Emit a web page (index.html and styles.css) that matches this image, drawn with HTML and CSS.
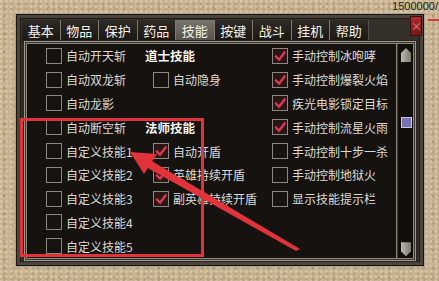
FILE: index.html
```html
<!DOCTYPE html>
<html lang="zh">
<head>
<meta charset="utf-8">
<link rel="stylesheet" href="styles.css">
</head>
<body>
<div class="hud">1500000/</div>
<div class="hud-line"></div>
<div class="panel">
  <div class="topbar">
    <div class="tabs">
      <div class="tab">基本</div>
      <div class="tab">物品</div>
      <div class="tab">保护</div>
      <div class="tab">药品</div>
      <div class="tab active">技能</div>
      <div class="tab">按键</div>
      <div class="tab">战斗</div>
      <div class="tab">挂机</div>
      <div class="tab">帮助</div>
    </div>
    <div class="close"><span>×</span></div>
  </div>
  <div class="body">
    <div class="list">
      <div class="item"><span class="box"></span>自动开天斩</div>
      <div class="head">道士技能</div>
      <div class="item"><span class="box on"><svg viewBox="0 0 15 15"><path d="M3 8 L6.5 11.5 L12.5 3.5"/></svg></span>手动控制冰咆哮</div>

      <div class="item"><span class="box"></span>自动双龙斩</div>
      <div class="item c2"><span class="box"></span>自动隐身</div>
      <div class="item"><span class="box on"><svg viewBox="0 0 15 15"><path d="M3 8 L6.5 11.5 L12.5 3.5"/></svg></span>手动控制爆裂火焰</div>

      <div class="item"><span class="box"></span>自动龙影</div>
      <div class="empty"></div>
      <div class="item"><span class="box on"><svg viewBox="0 0 15 15"><path d="M3 8 L6.5 11.5 L12.5 3.5"/></svg></span>疾光电影锁定目标</div>

      <div class="item"><span class="box"></span>自动断空斩</div>
      <div class="head">法师技能</div>
      <div class="item"><span class="box on"><svg viewBox="0 0 15 15"><path d="M3 8 L6.5 11.5 L12.5 3.5"/></svg></span>手动控制流星火雨</div>

      <div class="item"><span class="box"></span>自定义技能1</div>
      <div class="item c2"><span class="box on"><svg viewBox="0 0 15 15"><path d="M3 8 L6.5 11.5 L12.5 3.5"/></svg></span>自动开盾</div>
      <div class="item"><span class="box"></span>手动控制十步一杀</div>

      <div class="item"><span class="box"></span>自定义技能2</div>
      <div class="item c2"><span class="box on"><svg viewBox="0 0 15 15"><path d="M3 8 L6.5 11.5 L12.5 3.5"/></svg></span>英雄持续开盾</div>
      <div class="item"><span class="box"></span>手动控制地狱火</div>

      <div class="item"><span class="box"></span>自定义技能3</div>
      <div class="item c2"><span class="box on"><svg viewBox="0 0 15 15"><path d="M3 8 L6.5 11.5 L12.5 3.5"/></svg></span>副英雄持续开盾</div>
      <div class="item"><span class="box"></span>显示技能提示栏</div>

      <div class="item"><span class="box"></span>自定义技能4</div>
      <div class="empty"></div>
      <div class="empty"></div>

      <div class="item"><span class="box"></span>自定义技能5</div>
      <div class="empty"></div>
      <div class="empty"></div>
    </div>
    <div class="scroll">
      <div class="arrow up"></div>
      <div class="thumb"></div>
      <div class="arrow down"></div>
    </div>
  </div>
</div>
<div class="mark"></div>
<svg class="pointer" width="439" height="281" viewBox="0 0 439 281">
  <polygon points="300,249 296,251 146,167 150,160" fill="#e2333b"/>
  <polygon points="130,152 157,154 144,174" fill="#e2333b"/>
</svg>
</body>
</html>
```
FILE: styles.css
```css
* { box-sizing: border-box; }
html, body { margin: 0; padding: 0; }
body {
  width: 439px;
  height: 281px;
  overflow: hidden;
  position: relative;
  font-family: "Noto Sans CJK SC", "Noto Sans", sans-serif;
  background-color: #c7b391;
  background-image:
    radial-gradient(circle at 20% 30%, rgba(255,245,220,0.3) 0 1px, transparent 2px),
    radial-gradient(circle at 70% 60%, rgba(120,95,60,0.22) 0 1px, transparent 2px),
    radial-gradient(circle at 40% 80%, rgba(90,70,45,0.18) 0 1px, transparent 2px);
  background-size: 5px 5px, 7px 6px, 11px 9px;
  padding: 13px 0 0 15px;
}
.hud {
  position: absolute;
  right: 1px;
  top: 0;
  font: 11px "Liberation Sans", sans-serif;
  color: #1e1c1a;
}
.hud-line {
  position: absolute;
  left: 428px;
  top: 19px;
  width: 11px;
  height: 2px;
  background: #d43a3a;
}
.panel {
  width: 410px;
  height: 254px;
  background: #35302a;
  border: 1px solid #a9a396;
  box-shadow: inset 0 0 0 1px #1a1612, inset 0 0 0 4px #4a443a, inset 0 0 0 5px #1f1b17;
  padding: 6px;
  display: flex;
  flex-direction: column;
}
.topbar {
  display: flex;
  align-items: flex-start;
  height: 23px;
}
.tabs {
  display: flex;
  height: 21px;
  background: #1d1915;
}
.tab {
  width: 38.5px;
  height: 21px;
  border-right: 1px solid #7f796f;
  color: #f4f2ee;
  font-size: 13px;
  line-height: 21px;
  text-align: center;
  background: linear-gradient(#2e2a25, #1a1612);
}
.tab:last-child { border-right: 1px solid #55504a; }
.tab.active {
  background: linear-gradient(#7a756c, #55504a);
}
.close {
  margin-left: auto;
  margin-right: -4px;
  margin-top: -4px;
  width: 12px;
  height: 20px;
  background: linear-gradient(#b22a2a, #7a1616);
  border: 1px solid #3a1010;
  color: #d89090;
  font-size: 11px;
  line-height: 18px;
  text-align: center;
}
.body {
  flex: 1;
  display: flex;
  background: #151210;
  border: 1px solid #9c968b;
  box-shadow: 0 0 0 1px #2a2520, inset 0 0 0 1px #3a352e, inset 0 0 0 2px #8e887c;
  margin: 0 2px 2px 2px;
  padding: 2px;
}
.list {
  flex: 1;
  display: grid;
  grid-template-columns: 99px 127px 1fr;
  grid-auto-rows: 23.8px;
  padding: 0 0 0 19px;
  overflow: hidden;
  align-content: start;
  border-right: 1px solid #8e887c;
  box-shadow: 1px 0 0 #3a352e;
}
.item, .head {
  display: flex;
  align-items: center;
  font-size: 12px;
  color: #dedad2;
  white-space: nowrap;
}
.head {
  font-weight: bold;
  color: #f6f4f0;
  font-size: 12.5px;
}
.item.c2 { padding-left: 8px; }
.box {
  width: 16px;
  height: 16px;
  border: 1px solid #8c877f;
  margin-right: 4px;
  flex: none;
  background: #161311;
  position: relative;
}
.box.on {
  background: #2a1615;
}
.box svg {
  position: absolute;
  left: 0;
  top: 0;
  width: 14px;
  height: 14px;
}
.box svg path {
  fill: none;
  stroke: #dc3852;
  stroke-width: 2.6;
  stroke-linecap: round;
  stroke-linejoin: round;
}
.scroll {
  width: 14px;
  margin-left: 2px;
  display: flex;
  flex-direction: column;
  align-items: center;
  padding: 4px 0 2px;
  background: #110e0c;
}
.arrow {
  width: 10px;
  height: 14px;
  background: linear-gradient(90deg, #bdb8b0, #7e7970);
}
.arrow.up { clip-path: polygon(50% 0, 100% 35%, 100% 100%, 0 100%, 0 35%); }
.arrow.down { clip-path: polygon(0 0, 100% 0, 100% 65%, 50% 100%, 0 65%); margin-top: auto; }
.thumb {
  width: 11px;
  height: 11px;
  margin-top: 55px;
  background: #7a72b0;
  border: 1px solid #c9c4e6;
}
.mark {
  position: absolute;
  left: 20px;
  top: 118px;
  width: 184px;
  height: 139px;
  border: 3px solid #e2333b;
}
.pointer {
  position: absolute;
  left: 0;
  top: 0;
}
```
